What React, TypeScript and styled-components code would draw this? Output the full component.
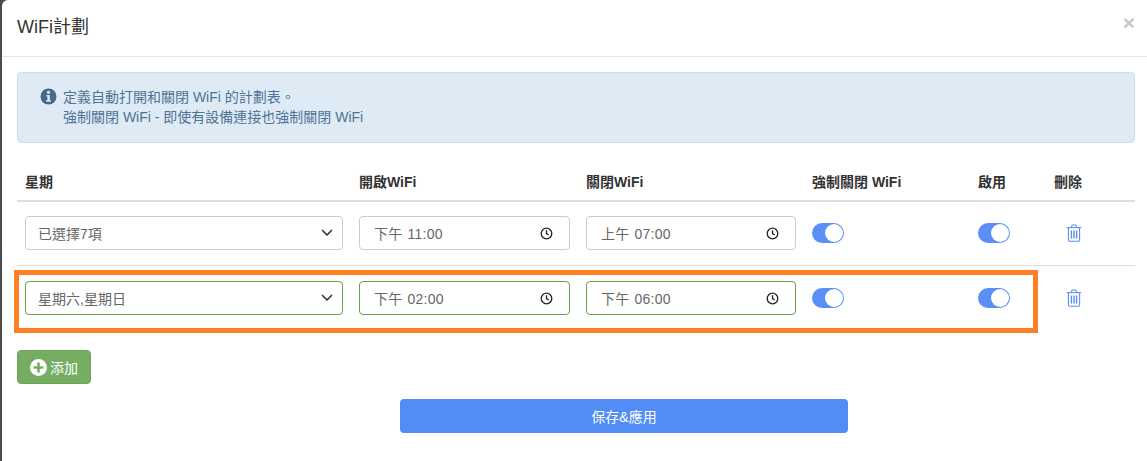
import styled, { createGlobalStyle } from 'styled-components'

const fontStack = `"Liberation Sans", "Noto Sans CJK TC", sans-serif`

const Global = createGlobalStyle`
  html, body {
    margin: 0;
    padding: 0;
    background: #4a4a4a;
  }
  body {
    font-family: ${fontStack};
    font-size: 14px;
    color: #333;
    overflow: hidden;
  }
`

const rows = [
  { days: '已選擇7項', on: '下午 11:00', off: '上午 07:00', saved: true },
  { days: '星期六,星期日', on: '下午 02:00', off: '下午 06:00', saved: false },
]

const ClockIcon = () => (
  <svg width="13" height="13" viewBox="0 0 13 13" fill="none" stroke="#222" strokeWidth="1.3">
    <circle cx="6.5" cy="6.5" r="5.3" />
    <path d="M6.5 3.2v3.4l2.2 1.4" />
  </svg>
)

const Chevron = () => (
  <svg width="12" height="8" viewBox="0 0 12 8" fill="none" stroke="#343a40" strokeWidth="1.7" strokeLinecap="round" strokeLinejoin="round">
    <path d="M1.5 1.5 6 6l4.5-4.5" />
  </svg>
)

const TrashIcon = () => (
  <svg width="16" height="18" viewBox="0 0 16 18" fill="none" stroke="#5a90f5" strokeWidth="1.1">
    <path d="M.8 3.6h14.4" />
    <path d="M5.2 3.4 6.2 1h3.6l1 2.4" />
    <path d="M2.4 3.6v12.2c0 .8.5 1.4 1.2 1.4h8.8c.7 0 1.2-.6 1.2-1.4V3.6" />
    <path d="M5.4 6.4v8M8 6.4v8M10.6 6.4v8" strokeWidth="1.4" />
  </svg>
)

const InfoIcon = () => (
  <svg width="17" height="17" viewBox="0 0 17 17">
    <circle cx="8.5" cy="8.5" r="8" fill="#45688c" />
    <circle cx="8.5" cy="4.3" r="1.6" fill="#dcebf5" />
    <path d="M6.4 7h3.4v5.2h1.1v1.6H6.2v-1.6h1.2V8.6h-1z" fill="#dcebf5" />
  </svg>
)

const PlusIcon = () => (
  <svg width="17" height="17" viewBox="0 0 17 17">
    <circle cx="8.5" cy="8.5" r="8.5" fill="#fff" />
    <path d="M7.2 3.6h2.6v3.6h3.6v2.6H9.8v3.6H7.2V9.8H3.6V7.2h3.6z" fill="#75ae62" />
  </svg>
)

export default function App() {
  return (
    <>
      <Global />
      <Modal>
        <Header>
          <Title>WiFi計劃</Title>
          <Close>×</Close>
        </Header>
        <Body>
          <Alert>
            <AlertIcon>
              <InfoIcon />
            </AlertIcon>
            <AlertText>
              定義自動打開和關閉 WiFi 的計劃表。
              <br />
              強制關閉 WiFi - 即使有設備連接也強制關閉 WiFi
            </AlertText>
          </Alert>
          <HeadRow>
            <HeadCell>星期</HeadCell>
            <HeadCell>開啟WiFi</HeadCell>
            <HeadCell>關閉WiFi</HeadCell>
            <HeadCell>強制關閉 WiFi</HeadCell>
            <HeadCell>啟用</HeadCell>
            <HeadCell>刪除</HeadCell>
          </HeadRow>
          {rows.map((row) => (
            <Row key={row.days} $last={!row.saved}>
              <Field $valid={!row.saved} $days>
                {row.days}
                <Chevron />
              </Field>
              <Field $valid={!row.saved}>
                <TimeText>{row.on}</TimeText>
                <ClockIcon />
              </Field>
              <Field $valid={!row.saved}>
                <TimeText>{row.off}</TimeText>
                <ClockIcon />
              </Field>
              <Toggle />
              <Toggle />
              <Trash>
                <TrashIcon />
              </Trash>
              {!row.saved && <Highlight />}
            </Row>
          ))}
          <AddButton>
            <PlusIcon />
            添加
          </AddButton>
          <SaveWrap>
            <SaveButton>保存&amp;應用</SaveButton>
          </SaveWrap>
        </Body>
      </Modal>
    </>
  )
}

const Modal = styled.div`
  margin-left: 2px;
  height: 461px;
  background: #fff;
  border-top-left-radius: 6px;
  overflow: hidden;
`

const Header = styled.header`
  height: 50px;
  border-bottom: 1px solid #e5e5e5;
  display: flex;
  align-items: center;
  justify-content: space-between;
  padding: 0 12px 6px 15px;
`

const Title = styled.h4`
  margin: 0;
  font-size: 18px;
  font-weight: 400;
  color: #333;
`

const Close = styled.span`
  font-family: "Liberation Sans", sans-serif;
  font-size: 21px;
  font-weight: 700;
  color: #c8c8c8;
  line-height: 1;
  margin-top: -5px;
`

const Body = styled.div`
  padding: 15px 12px 0 15px;
`

const Alert = styled.div`
  height: 71px;
  box-sizing: border-box;
  background: #deebf5;
  border: 1px solid #c6e2f0;
  border-radius: 4px;
  display: flex;
  align-items: flex-start;
  padding: 14px 22px;
  color: #4f7396;
  font-size: 14px;
  line-height: 20px;
`

const AlertIcon = styled.span`
  margin: 1px 6px 0 0;
  height: 17px;
  display: flex;
`

const AlertText = styled.div``

const columns = `grid-template-columns: 334px 227px 226px 166px 76px 1fr;`

const HeadRow = styled.div`
  ${columns}
  display: grid;
  height: 59px;
  box-sizing: border-box;
  align-items: end;
  padding: 0 0 8px 8px;
  border-bottom: 2px solid #ddd;
`

const HeadCell = styled.div`
  font-size: 14px;
  font-weight: 700;
  color: #333;
  line-height: 20px;
`

const Row = styled.div<{ $last?: boolean }>`
  ${columns}
  display: grid;
  position: relative;
  height: 64px;
  box-sizing: border-box;
  align-items: center;
  padding: 0 0 ${(p) => (p.$last ? '0' : '1px')} 8px;
  border-bottom: ${(p) => (p.$last ? '0' : '1px solid #ddd')};
`

const Field = styled.div<{ $valid?: boolean; $days?: boolean }>`
  box-sizing: border-box;
  height: 34px;
  width: calc(100% - 16px);
  border: 1px solid ${(p) => (p.$valid ? '#67a145' : '#ccc')};
  border-radius: 4px;
  background: #fff;
  display: flex;
  align-items: center;
  justify-content: space-between;
  padding: ${(p) => (p.$days ? '0 9px 0 12px' : '0 16px 0 14px')};
  color: #666;
  font-size: 14px;
`

const TimeText = styled.span`
  word-spacing: 0.6px;
  letter-spacing: 0.3px;
`

const Toggle = styled.span`
  width: 32px;
  height: 20px;
  border-radius: 10px;
  background: #5b8ff5;
  position: relative;
  &::after {
    content: '';
    position: absolute;
    right: 1px;
    top: 1px;
    width: 18px;
    height: 18px;
    border-radius: 50%;
    background: #fff;
  }
`

const Trash = styled.span`
  display: flex;
  padding-left: 12px;
`

const Highlight = styled.span`
  position: absolute;
  left: -3px;
  top: 4px;
  width: 1024px;
  height: 63px;
  box-sizing: border-box;
  border: 5px solid #ff7f27;
  pointer-events: none;
`

const AddButton = styled.button`
  all: unset;
  box-sizing: border-box;
  width: 74px;
  height: 34px;
  margin-top: 20px;
  background: #75ae62;
  border: 1px solid #6ca55a;
  border-radius: 4px;
  color: #fff;
  font-size: 14px;
  display: flex;
  align-items: center;
  justify-content: center;
  gap: 3px;
`

const SaveWrap = styled.div`
  display: flex;
  margin-top: 15px;
  padding-left: 383px;
`

const SaveButton = styled.button`
  all: unset;
  box-sizing: border-box;
  width: 448px;
  height: 34px;
  background: #528df5;
  border-radius: 4px;
  color: #fff;
  font-size: 14px;
  display: flex;
  align-items: center;
  justify-content: center;
`
